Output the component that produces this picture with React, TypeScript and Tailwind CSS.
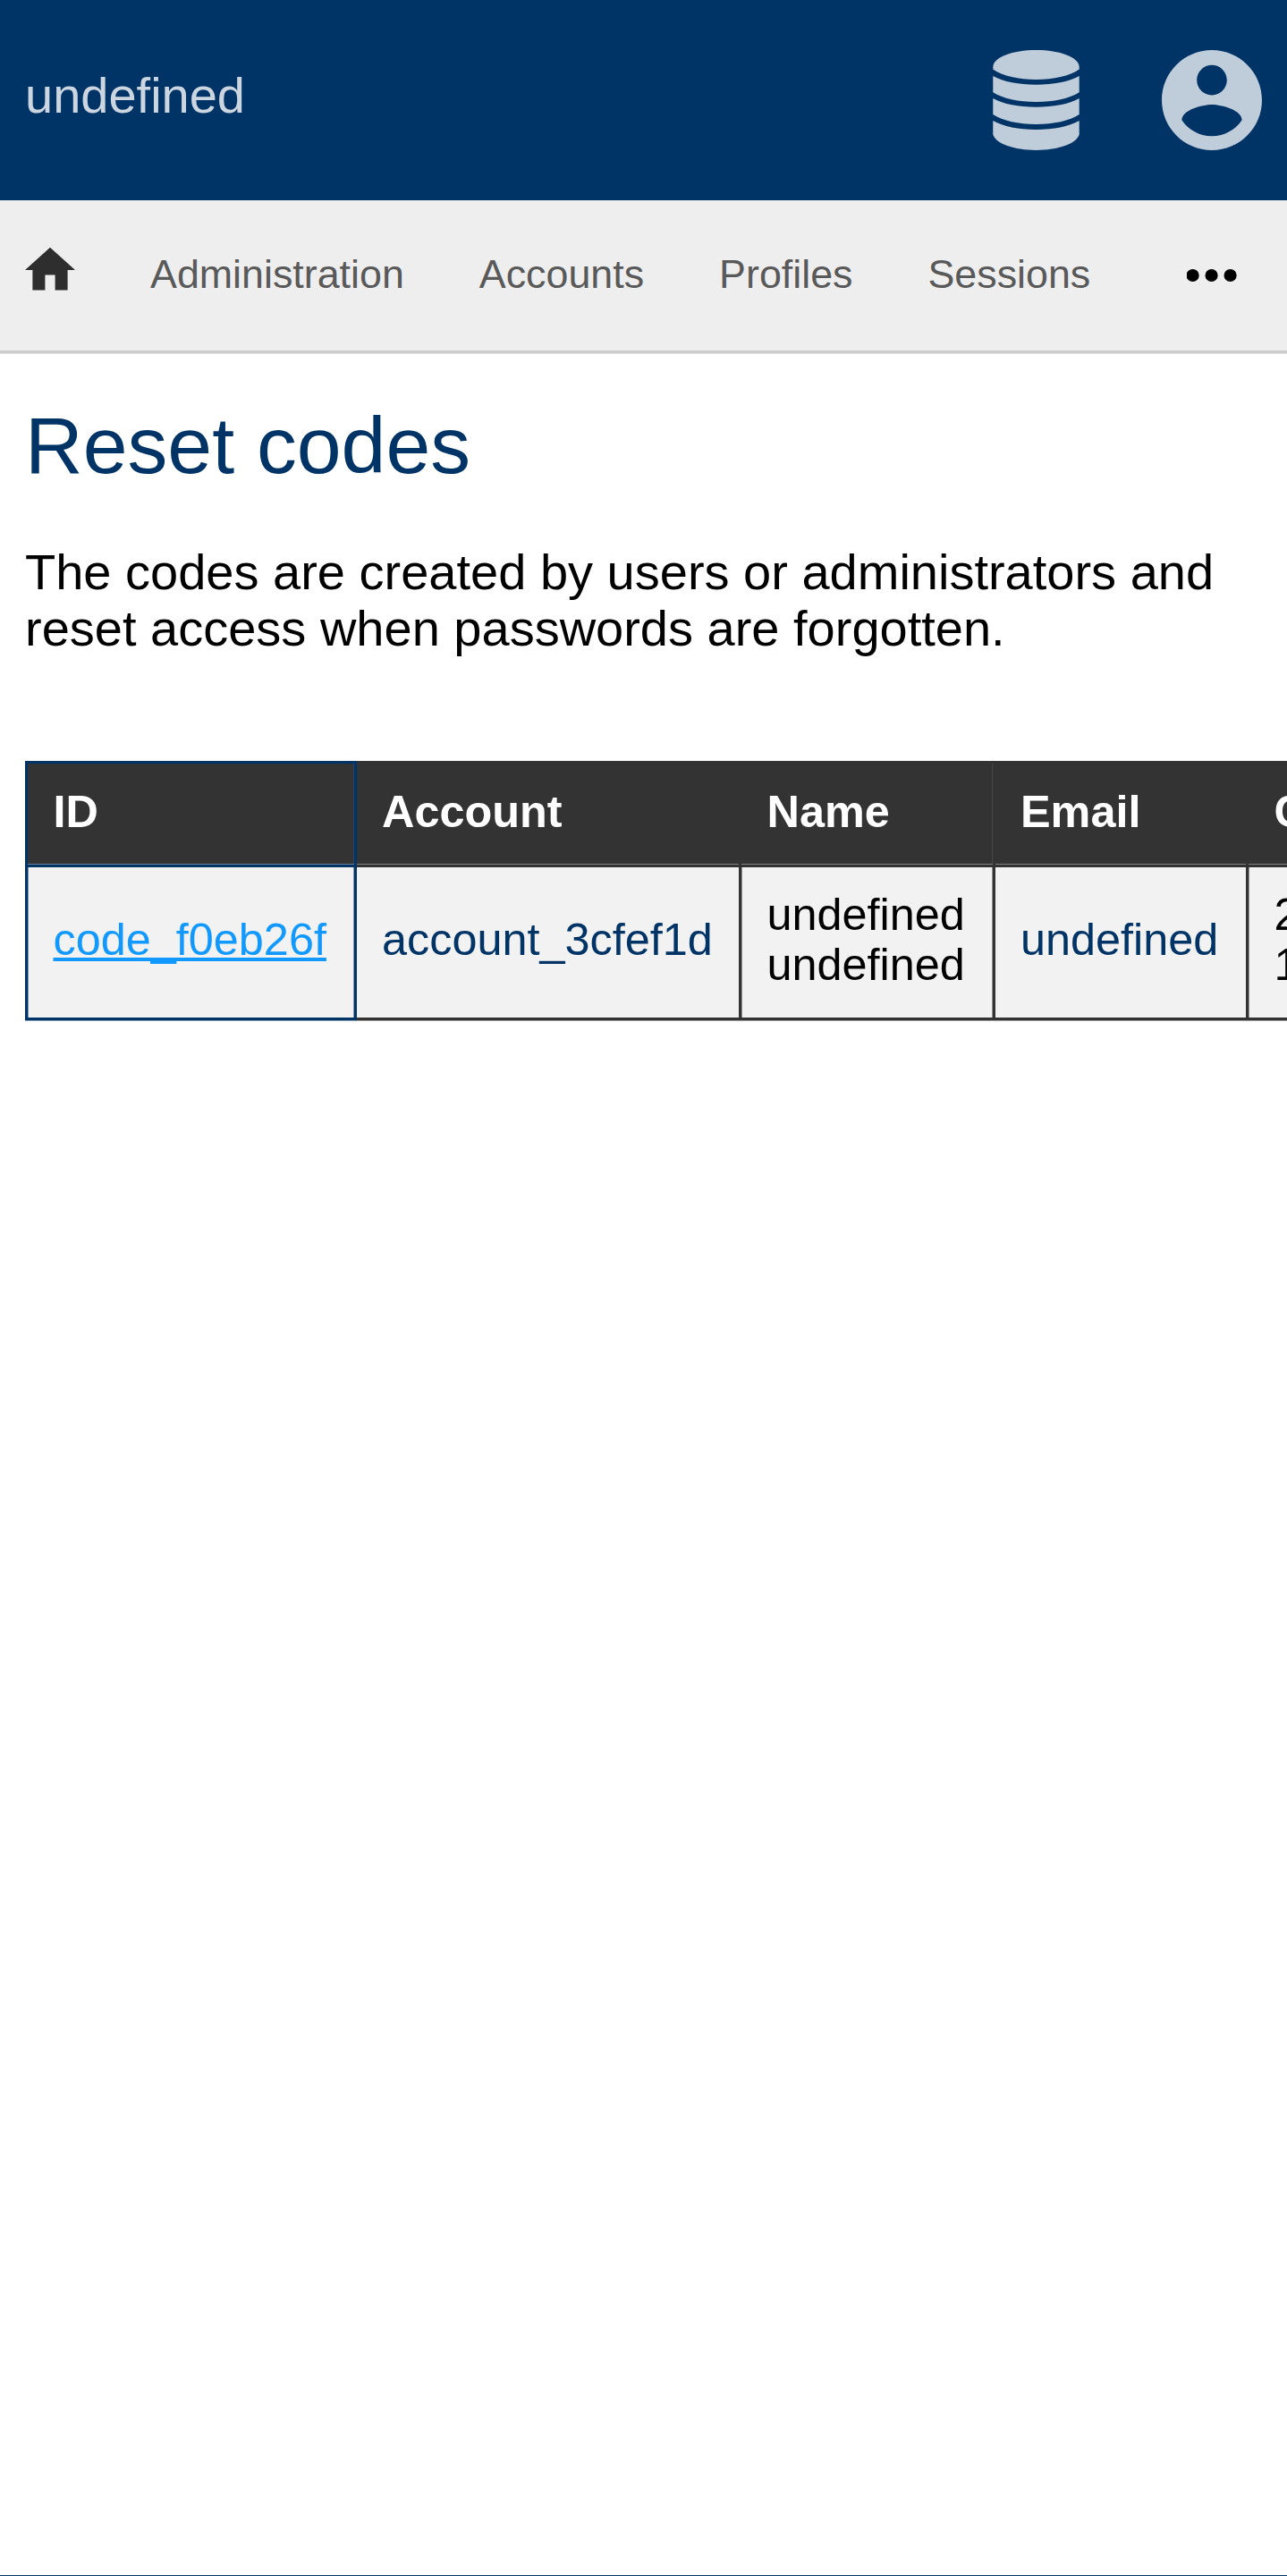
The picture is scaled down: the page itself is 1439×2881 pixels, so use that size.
import React from "react";

const navItems = ["Administration", "Accounts", "Profiles", "Sessions"];

function DatabaseIcon() {
  return (
    <svg viewBox="0 0 98 112" className="h-[112px] w-[98px] shrink-0" fill="#bfccd9">
      <path d="M.3 19C.3 8 22 0 48.5 0S96.7 8 96.7 19V21.5C86 29 68 33 48.5 33S11 29 .3 21.5Z" />
      <path d="M.3 29C12 35.500 29 38.700 48.500 38.700S85 35.500 96.700 29V47.200C86 54 68 58 48.500 58S11 54 .3 47.200Z" />
      <path d="M.3 54C12 60.500 29 63.700 48.500 63.700S85 60.500 96.700 54V72C86 79 68 83 48.500 83S11 79 .3 72Z" />
      <path d="M.3 79C12 85.500 29 89 48.500 89S85 85.500 96.700 79V94.500C94 104.500 73 111.900 48.500 111.900S3 104.500 .3 94.500Z" />
    </svg>
  );
}

function AccountIcon() {
  return (
    <svg viewBox="2 2 20 20" className="h-[112px] w-[112px] shrink-0" fill="#bfccd9">
      <path d="M12 2C6.480 2 2 6.480 2 12s4.480 10 10 10 10-4.480 10-10S17.520 2 12 2zm0 3c1.660 0 3 1.340 3 3s-1.340 3-3 3-3-1.340-3-3 1.340-3 3-3zm0 14.200c-2.500 0-4.710-1.280-6-3.220.03-1.990 4-3.080 6-3.080 1.990 0 5.970 1.090 6 3.080-1.290 1.940-3.500 3.220-6 3.220z" />
    </svg>
  );
}

function Header() {
  return (
    <header className="flex h-[224px] items-center bg-[#003366] px-7">
      <span className="flex-1 pb-[11px] text-[56px] leading-[63px] text-[#ccd6e0]">undefined</span>
      <div className="flex items-center gap-[91px]">
        <DatabaseIcon />
        <AccountIcon />
      </div>
    </header>
  );
}

function Nav() {
  return (
    <nav className="flex h-[172px] items-start border-b border-[#e5e5e5] bg-[#eeeeee] px-7 shadow-[inset_0_-3px_0_#cccccc]">
      <svg viewBox="2 2 20 20" className="mt-[50px] h-14 w-14 shrink-0" fill="#2e2e2e">
        <path d="M10 20v-6h4v6h5v-8h3L12 3 2 12h3v8z" />
      </svg>
      <div className="ml-[84px] mt-[57px] flex flex-1 gap-[84px] text-[44.800px] leading-[50px] text-[#595959]">
        {navItems.map((item) => (
          <a key={item}>{item}</a>
        ))}
      </div>
      <svg viewBox="0 0 56 56" className="mr-7 mt-14 h-14 w-14 shrink-0" fill="#000">
        <circle cx="6.600" cy="28" r="7.100" />
        <circle cx="27.600" cy="28" r="7.100" />
        <circle cx="48.600" cy="28" r="7.100" />
      </svg>
    </nav>
  );
}

const th = "flex items-center border-y-[3px] border-r-[3px] border-[#333333] bg-[#333333] pb-1.5 font-bold text-white";
const td = "flex items-center border-b-[3px] border-r-[3px] border-[#333333] bg-[#f2f2f2] pb-[7px]";

function CodesTable() {
  return (
    <div className="mt-[117px] grid w-[1700px] grid-cols-[371px_430px_284px_283px_304px] grid-rows-[119px_171px] text-[50.400px] leading-[56px]">
      <div className="flex items-center border-[3px] border-[#003366] bg-[#333333] pb-1.5 pl-[28.500px] font-bold text-white shadow-[inset_0_-1px_0_#66809a,inset_-1px_0_0_#294663,inset_0_1px_0_#2b3338]">
        ID
      </div>
      <div className={`${th} pl-7 shadow-[inset_0_-1px_0_#808080]`}>Account</div>
      <div className={`${th} pl-[28.500px] shadow-[inset_0_-1px_0_#808080,inset_-1px_0_0_#474747]`}>Name</div>
      <div className={`${th} pl-7 shadow-[inset_0_-1px_0_#808080]`}>Email</div>
      <div className={`${th} pl-[28.500px] shadow-[inset_0_-1px_0_#808080]`}>Created</div>

      <div className="flex items-center border-x-[3px] border-b-[3px] border-[#003366] bg-[#f2f2f2] pb-[7px] pl-[28.500px] shadow-[inset_1px_0_0_#7992ac,inset_-1px_0_0_#7992ac,0_1px_0_#8099b2]">
        <a className="text-[#1199ff] underline decoration-[4px] underline-offset-[3px] [text-decoration-skip-ink:none]">code_f0eb26f</a>
      </div>
      <div className={`${td} pl-7 text-[#003366] shadow-[0_1px_0_#999999]`}>account_3cfef1d</div>
      <div className={`${td} pl-[28.500px] text-black shadow-[inset_1px_0_0_#929292,inset_-1px_0_0_#929292,0_1px_0_#999999]`}>
        <span>
          undefined
          <br />
          undefined
        </span>
      </div>
      <div className={`${td} pl-7 text-[#003366] shadow-[0_1px_0_#999999]`}>undefined</div>
      <div className={`${td} pl-[28.500px] text-black shadow-[inset_1px_0_0_#929292,0_1px_0_#999999]`}>
        <span>
          2
          <br />
          1
        </span>
      </div>
    </div>
  );
}

export default function App() {
  return (
    <div className="flex h-[2881px] w-[1439px] flex-col overflow-hidden border-b border-[#003366] bg-white font-['Liberation_Sans',Arial,sans-serif]">
      <Header />
      <Nav />
      <main className="flex-1 px-7 pt-[52px]">
        <h1 className="text-[89.600px] leading-[100px] text-[#003366]">Reset codes</h1>
        <p className="mt-[60px] text-[56px] leading-[63px] text-black">
          The codes are created by users or administrators and reset access when passwords are forgotten.
        </p>
        <CodesTable />
      </main>
    </div>
  );
}
